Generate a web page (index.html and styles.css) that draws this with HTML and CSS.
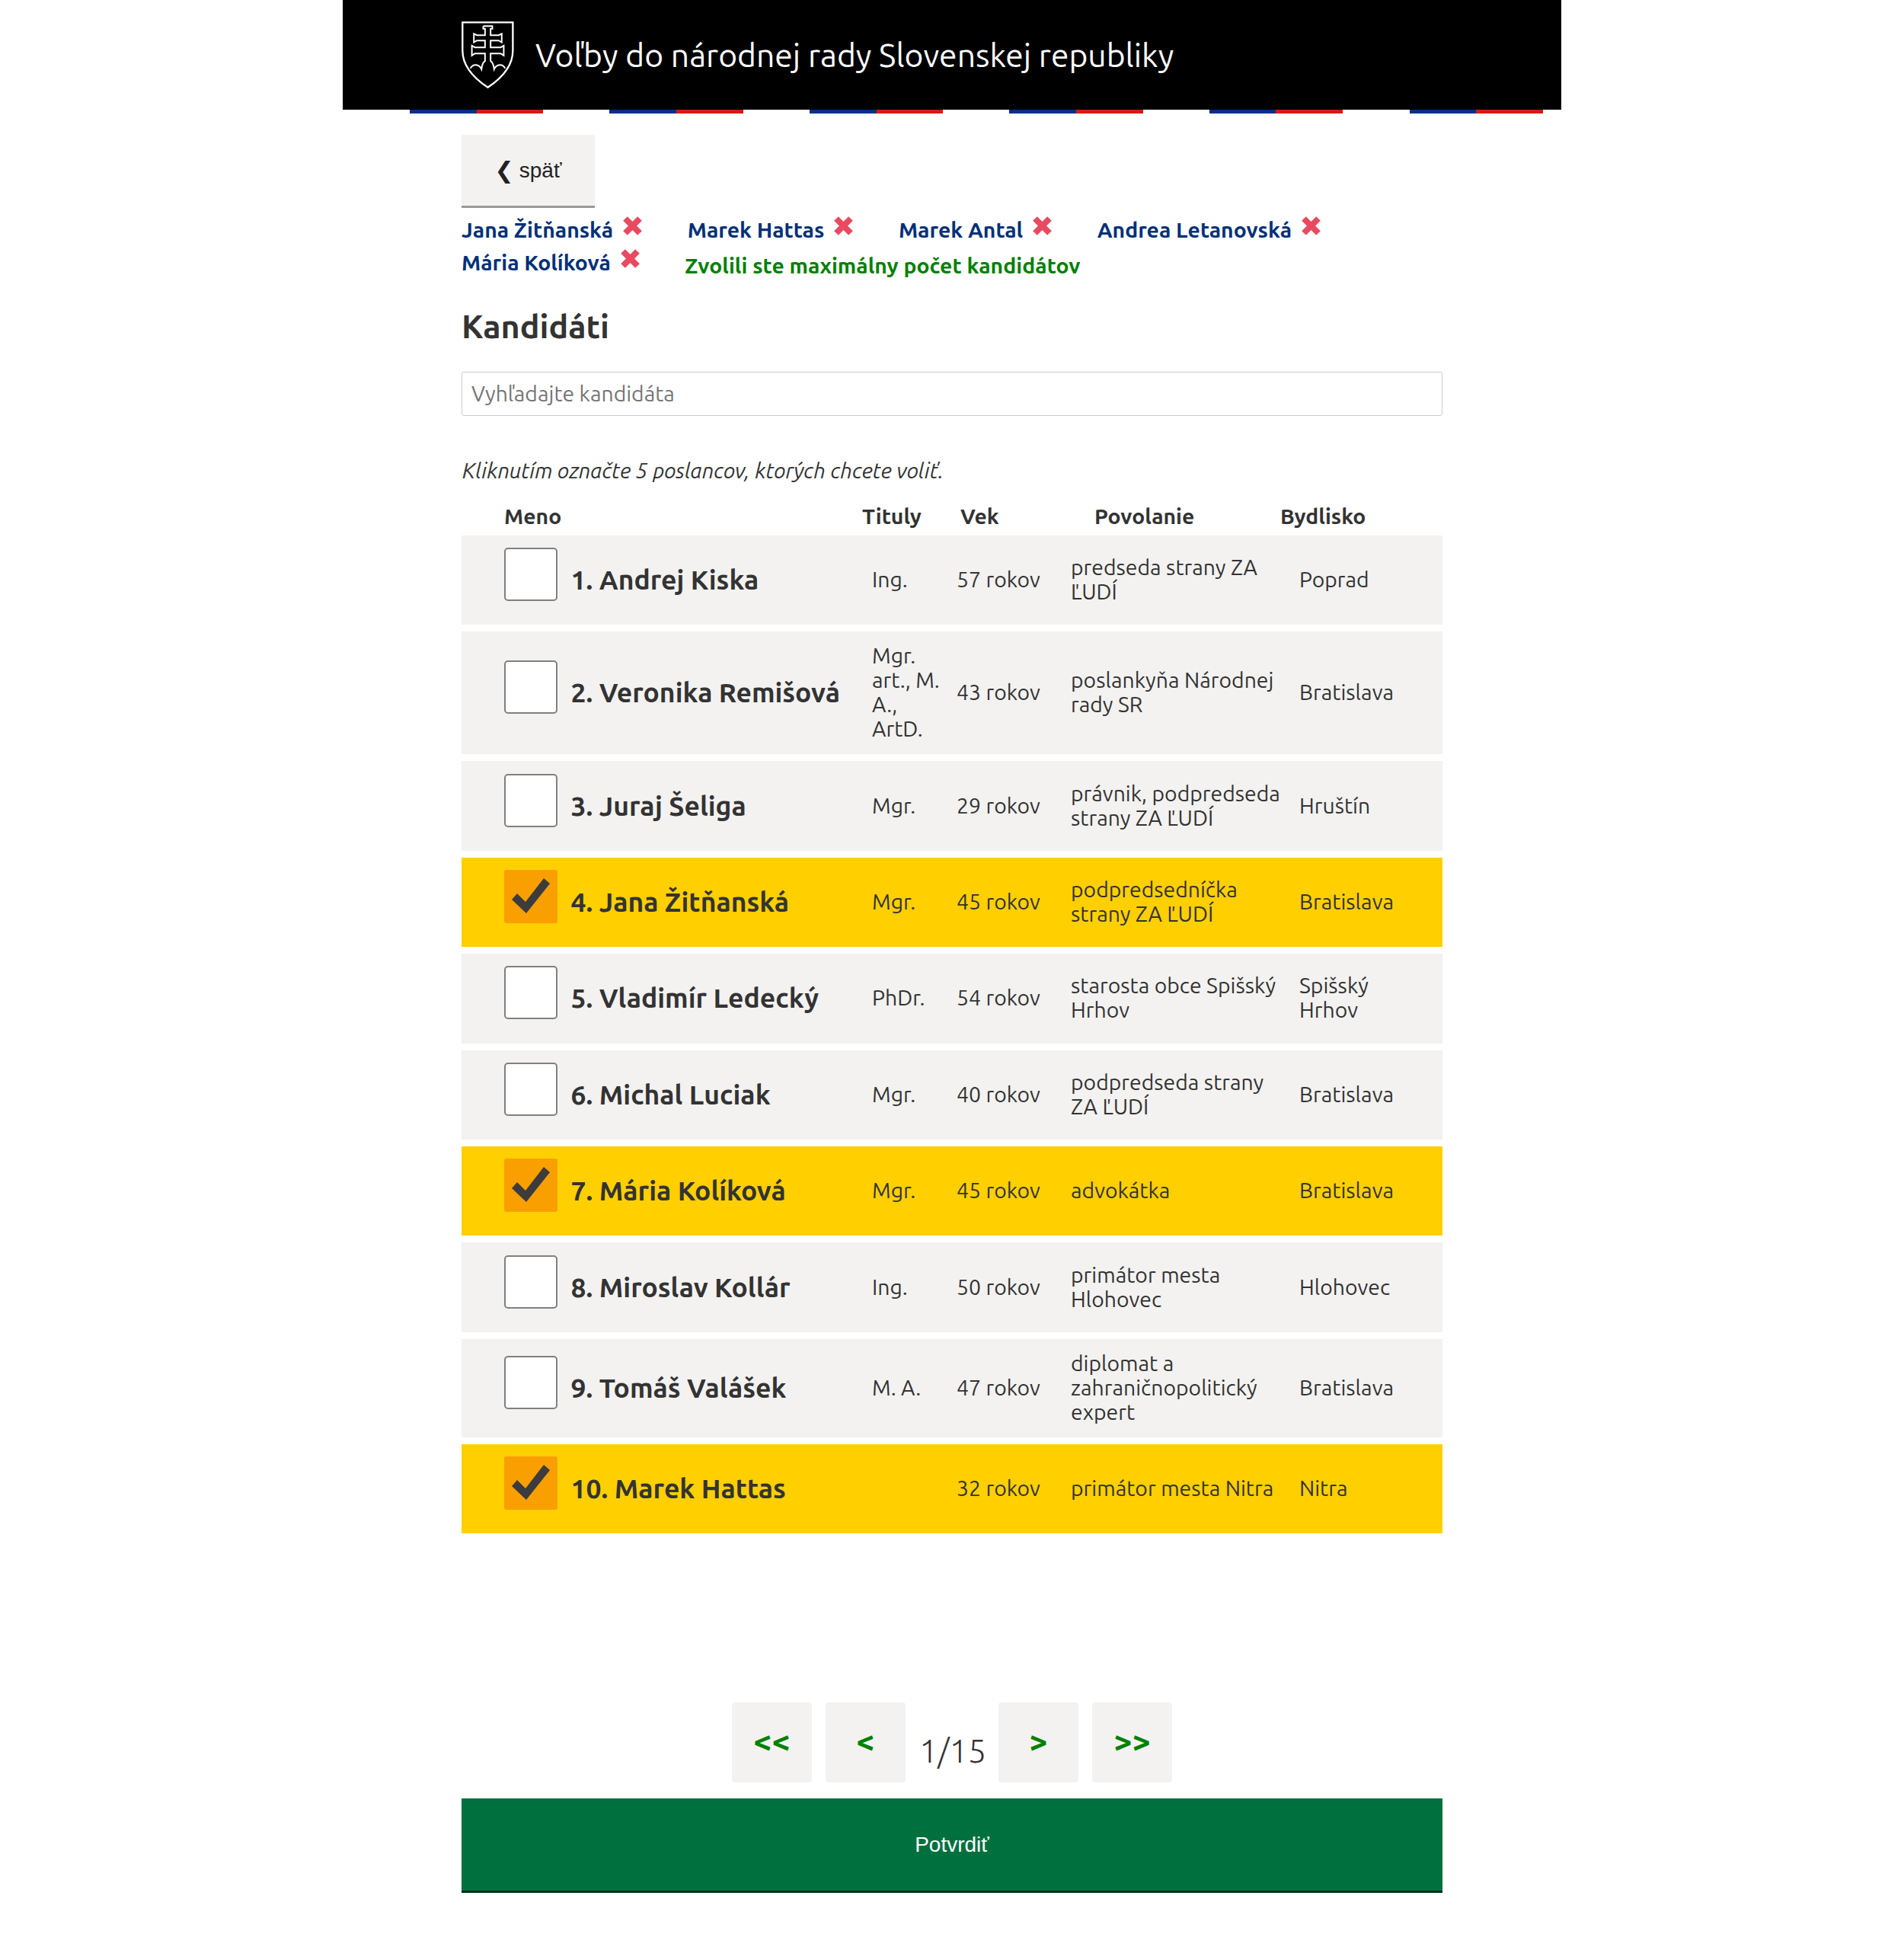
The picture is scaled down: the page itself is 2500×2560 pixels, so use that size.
FILE: index.html
```html
<!DOCTYPE html>
<html lang="sk">
<head>
<meta charset="utf-8">
<title>Voľby do národnej rady Slovenskej republiky</title>
<link rel="stylesheet" href="styles.css">
</head>
<body>
<header class="site-head">
  <div class="head-bar">
    <svg class="crest" viewBox="50 55 206 265" aria-hidden="true">
      <path class="crest-line" d="M53 59H252V170C252 235 200 285 153 316C106 285 53 235 53 170Z"/>
      <path class="crest-line thin" d="M135 74H171V84H164V110H196L208 104V138L196 131H164V158H204L216 151V190L204 182H164V212C172 216 176 228 178 244C188 222 212 222 222 241M135 74V84H142V110H110L98 104V138L110 131H142V158H102L90 151V190L102 182H142V212C134 216 130 228 128 244C118 222 94 222 84 241"/>
    </svg>
    <h1 class="site-title">Voľby do národnej rady Slovenskej republiky</h1>
  </div>
  <div class="stripe"></div>
</header>
<main class="content">
  <a class="back"><span class="chev">❮</span> späť</a>
  <div class="chips">
    <span class="chip">Jana Žitňanská <svg class="x" viewBox="0 0 25 25"><path d="M3 3L22 22M22 3L3 22"/></svg></span>
    <span class="chip">Marek Hattas <svg class="x" viewBox="0 0 25 25"><path d="M3 3L22 22M22 3L3 22"/></svg></span>
    <span class="chip">Marek Antal <svg class="x" viewBox="0 0 25 25"><path d="M3 3L22 22M22 3L3 22"/></svg></span>
    <span class="chip">Andrea Letanovská <svg class="x" viewBox="0 0 25 25"><path d="M3 3L22 22M22 3L3 22"/></svg></span>
    <span class="chip">Mária Kolíková <svg class="x" viewBox="0 0 25 25"><path d="M3 3L22 22M22 3L3 22"/></svg></span>
    <span class="limit">Zvolili ste maximálny počet kandidátov</span>
  </div>
  <h2 class="section-title">Kandidáti</h2>
  <input class="search" type="text" placeholder="Vyhľadajte kandidáta">
  <p class="hint">Kliknutím označte 5 poslancov, ktorých chcete voliť.</p>
  <div class="thead">
    <span class="th-name">Meno</span><span class="th-title">Tituly</span><span class="th-age">Vek</span><span class="th-job">Povolanie</span><span class="th-city">Bydlisko</span>
  </div>
  <div class="list">
    <div class="row"><span class="box"></span><span class="name">1. Andrej Kiska</span><span>Ing.</span><span>57 rokov</span><span>predseda strany ZA<br>ĽUDÍ</span><span>Poprad</span></div>
    <div class="row"><span class="box"></span><span class="name">2. Veronika Remišová</span><span>Mgr.<br>art., M.<br>A.,<br>ArtD.</span><span>43 rokov</span><span>poslankyňa Národnej<br>rady SR</span><span>Bratislava</span></div>
    <div class="row"><span class="box"></span><span class="name">3. Juraj Šeliga</span><span>Mgr.</span><span>29 rokov</span><span>právnik, podpredseda<br>strany ZA ĽUDÍ</span><span>Hruštín</span></div>
    <div class="row on"><span class="box"><svg viewBox="0 0 70 70"><polygon points="10,39 17,31 28,42 52,11 60,18 29,57"/></svg></span><span class="name">4. Jana Žitňanská</span><span>Mgr.</span><span>45 rokov</span><span>podpredsedníčka<br>strany ZA ĽUDÍ</span><span>Bratislava</span></div>
    <div class="row"><span class="box"></span><span class="name">5. Vladimír Ledecký</span><span>PhDr.</span><span>54 rokov</span><span>starosta obce Spišský<br>Hrhov</span><span>Spišský<br>Hrhov</span></div>
    <div class="row"><span class="box"></span><span class="name">6. Michal Luciak</span><span>Mgr.</span><span>40 rokov</span><span>podpredseda strany<br>ZA ĽUDÍ</span><span>Bratislava</span></div>
    <div class="row on"><span class="box"><svg viewBox="0 0 70 70"><polygon points="10,39 17,31 28,42 52,11 60,18 29,57"/></svg></span><span class="name">7. Mária Kolíková</span><span>Mgr.</span><span>45 rokov</span><span>advokátka</span><span>Bratislava</span></div>
    <div class="row"><span class="box"></span><span class="name">8. Miroslav Kollár</span><span>Ing.</span><span>50 rokov</span><span>primátor mesta<br>Hlohovec</span><span>Hlohovec</span></div>
    <div class="row"><span class="box"></span><span class="name">9. Tomáš Valášek</span><span>M. A.</span><span>47 rokov</span><span>diplomat a<br>zahraničnopolitický<br>expert</span><span>Bratislava</span></div>
    <div class="row on"><span class="box"><svg viewBox="0 0 70 70"><polygon points="10,39 17,31 28,42 52,11 60,18 29,57"/></svg></span><span class="name">10. Marek Hattas</span><span></span><span>32 rokov</span><span>primátor mesta Nitra</span><span>Nitra</span></div>
  </div>
  <nav class="pager">
    <a class="page-btn">&lt;&lt;</a>
    <a class="page-btn">&lt;</a>
    <span class="page-num">1/15</span>
    <a class="page-btn">&gt;</a>
    <a class="page-btn">&gt;&gt;</a>
  </nav>
  <button class="submit" type="button">Potvrdiť</button>
</main>
</body>
</html>
```
FILE: styles.css
```css
* { box-sizing: border-box; }
html, body { margin: 0; padding: 0; }
body {
  background: #fff;
  color: #333;
  font-family: Ubuntu, Lato, "Noto Sans", sans-serif;
  font-size: 28.35px;
  height: 2560px;
}
.site-head { width: 1600px; margin-left: 450px; }
.head-bar {
  background: #000;
  height: 144px;
  padding: 28px 0 0 156px;
  display: flex;
  gap: 28px;
}
.crest { width: 69px; height: 88px; flex: none; }
.crest-line { fill: none; stroke: #fff; stroke-width: 7; stroke-linejoin: miter; }
.crest-line.thin { stroke-width: 6; }
.site-title {
  margin: 0;
  color: #fff;
  font-size: 42.6px;
  font-weight: 400;
  line-height: 88px;
  white-space: nowrap;
}
.stripe {
  height: 5px;
  margin-left: 88px;
  background: repeating-linear-gradient(90deg, #003087 0 87.5px, #d61a10 87.5px 175px, #fff 175px 262.5px);
}
.content { width: 1288px; margin-left: 606px; padding-top: 28px; }
.back {
  display: flex;
  align-items: center;
  justify-content: center;
  gap: 7px;
  width: 175px;
  height: 96px;
  background: #f3f2f1;
  border-bottom: 3px solid #999;
  font-family: "Liberation Sans", sans-serif;
  font-size: 28px;
  color: #222;
}
.chev { font-family: "DejaVu Sans", sans-serif; font-size: 30px; line-height: 34px; }
.chips {
  display: flex;
  flex-wrap: wrap;
  column-gap: 59.5px;
  row-gap: 4px;
  margin-top: 8px;
  font-weight: 700;
  line-height: 36px;
}
.chip { color: #003078; display: inline-flex; align-items: flex-start; gap: 13px; white-space: nowrap; padding-top: 3px; }
.x { width: 25px; height: 25px; }
.x path { stroke: #e84a5f; stroke-width: 8; fill: none; }
.limit { color: #008000; padding-top: 7px; letter-spacing: 0.05px; }
.section-title { margin: 33px 0 0; font-size: 43px; font-weight: 700; line-height: 56px; color: #333; }
.search {
  display: block;
  width: 100%;
  height: 58px;
  margin-top: 32px;
  padding: 0 12px 2px;
  border: 1px solid #ccc;
  border-radius: 3px;
  background: #fff;
  font: inherit;
  color: #333;
}
.search::placeholder { color: #757575; opacity: 1; }
.hint { margin: 54px 0 0 1px; font-size: 28px; font-style: italic; line-height: 36px; color: #333; }
.thead {
  height: 43px;
  margin-top: 24px;
  font-weight: 700;
  line-height: 36px;
  display: flex;
}
.th-name { margin-left: 56px; width: 470px; }
.th-title { width: 129px; }
.th-age { width: 176px; }
.th-job { width: 244px; }
.list { display: flex; flex-direction: column; gap: 9px; }
.row {
  display: grid;
  grid-template-columns: 87.5px 395.5px 111px 150px 300px 1fr;
  align-items: center;
  min-height: 117.4px;
  padding: 16px 0 17px 56px;
  background: #f3f2f1;
  line-height: 32px;
}
.row.on { background: #ffcf00; }
.box {
  display: block;
  width: 70px;
  height: 70px;
  margin-top: -14px;
  border: 2px solid #808080;
  border-radius: 5px;
  background: #fff;
}
.on .box { background: #fa9f00; border: 0; border-radius: 3px; }
.box svg { display: block; width: 70px; height: 70px; }
.box polygon { fill: #3c3c3c; }
.name { font-size: 35.5px; font-weight: 700; white-space: nowrap; }
.pager {
  display: flex;
  justify-content: center;
  gap: 18px;
  margin-top: 222px;
}
.page-btn {
  display: flex;
  align-items: center;
  justify-content: center;
  width: 105px;
  height: 105px;
  padding-bottom: 6px;
  background: #f3f2f1;
  border-radius: 4px;
  color: #008000;
  font-size: 43px;
  font-weight: 700;
}
.page-num { width: 86px; text-align: center; font-size: 43px; font-weight: 300; line-height: 83px; padding-top: 22px; color: #333; }
.submit {
  display: block;
  width: 100%;
  height: 124px;
  margin-top: 21px;
  border: 0;
  border-bottom: 3px solid #002e1b;
  background: #00703f;
  color: #fff;
  font-family: "Liberation Sans", sans-serif;
  font-size: 28px;
}
```
